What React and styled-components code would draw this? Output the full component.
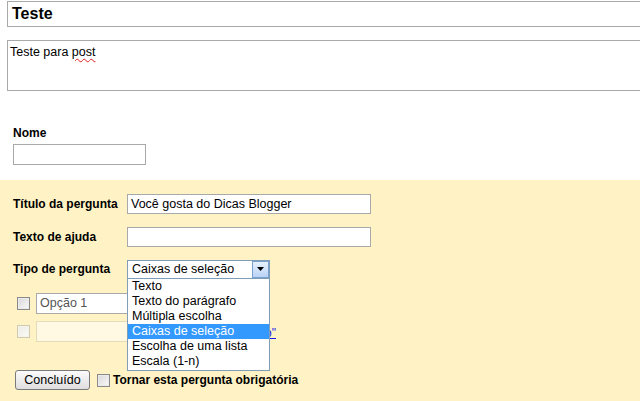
import React from 'react';
import styled, { createGlobalStyle } from 'styled-components';

const GlobalStyle = createGlobalStyle`
  html, body {
    margin: 0;
    padding: 0;
    width: 640px;
    height: 401px;
    overflow: hidden;
    background: #fff;
    font-family: "Liberation Sans", Arial, sans-serif;
    font-size: 12px;
    color: #000;
  }
`;

const Page = styled.div`
  width: 640px;
  height: 401px;
  display: flex;
  flex-direction: column;
`;

// top white part: title, description, "Nome"
const Header = styled.div`
  padding: 1px 0 0 7px;
  height: 180px;
  box-sizing: border-box;
`;

// both boxes run on past the right edge of the window, so no right border
const TitleBox = styled.div`
  height: 26px;
  box-sizing: border-box;
  border: 1px solid #a9a9a9;
  border-right: none;
  padding: 3px 0 0 4px;
  font-size: 16px;
  font-weight: bold;
`;

const DescBox = styled.div`
  height: 51px;
  margin-top: 13px;
  box-sizing: border-box;
  border: 1px solid #a9a9a9;
  border-right: none;
  padding: 4px 0 0 2px;
  font-size: 12.5px;
`;

const Misspelled = styled.span`
  text-decoration: underline wavy #e02020;
  text-decoration-thickness: 1px;
  text-underline-offset: 2px;
`;

const NameField = styled.div`
  margin: 35px 0 0 6px;
  display: flex;
  flex-direction: column;
  gap: 4px;
`;

const Label = styled.label`
  font-weight: bold;
  font-size: 12px;
  width: ${(p) => p.$width || 'auto'};
  flex-shrink: 0;
`;

const TextInput = styled.div`
  width: ${(p) => p.$width}px;
  height: ${(p) => p.$height || 20}px;
  box-sizing: border-box;
  border: 1px solid ${(p) => (p.$disabled ? '#e3dcba' : '#a9a9a9')};
  background: ${(p) => (p.$disabled ? '#fff9e3' : '#fff')};
  color: ${(p) => p.$color || '#000'};
  padding: 2px 0 0 3px;
  font-size: 12.5px;
  white-space: nowrap;
  overflow: hidden;
  flex-shrink: 0;
`;

// yellow editing area
const Editor = styled.div`
  flex: 1;
  background: #fff3c5;
  padding: 14px 0 0 13px;
`;

const Row = styled.div`
  display: flex;
  align-items: center;
  height: 20px;
  margin-bottom: ${(p) => p.$gap}px;
`;

const SelectWrap = styled.div`
  position: relative;
  width: 143px;
  height: 19px;
`;

const SelectBox = styled.div`
  width: 100%;
  height: 100%;
  box-sizing: border-box;
  border: 1px solid #7f9db9;
  background: #fff;
  display: flex;
  align-items: center;
  padding-left: 4px;
  font-size: 12.5px;
`;

const SelectText = styled.span`
  flex: 1;
`;

const ArrowButton = styled.span`
  width: 17px;
  height: 17px;
  box-sizing: border-box;
  border: 1px solid #7aa0ce;
  background: linear-gradient(#e8f1fd, #b9d3f6);
  display: flex;
  align-items: center;
  justify-content: center;
`;

const Menu = styled.ul`
  position: absolute;
  top: 18px;
  left: 0;
  width: 143px;
  box-sizing: border-box;
  margin: 0;
  padding: 0 0 1px;
  list-style: none;
  border: 1px solid #7f9db9;
  background: #fff;
  z-index: 2;
`;

const MenuItem = styled.li`
  height: 15px;
  line-height: 15px;
  padding-left: 4px;
  font-size: 12.5px;
  background: ${(p) => (p.$active ? '#3399ff' : 'transparent')};
  color: ${(p) => (p.$active ? '#fff' : '#000')};
`;

const OptionRow = styled.div`
  display: flex;
  align-items: center;
  gap: 6px;
  height: 21px;
  margin: ${(p) => p.$margin};
  padding-left: 4px;
`;

const Check = styled.span`
  width: 13px;
  height: 13px;
  box-sizing: border-box;
  flex-shrink: 0;
  border: 1px solid ${(p) => (p.$disabled ? '#cfcab2' : '#8a8a8a')};
  background: ${(p) =>
    p.$disabled
      ? 'linear-gradient(135deg, #ecebe4, #fbfbf8)'
      : 'linear-gradient(135deg, #d8d8d8, #fafafa)'};
  box-shadow: inset 0 0 0 1px ${(p) => (p.$disabled ? '#f5f3ea' : '#eaeaea')};
`;

const OtherLine = styled.div`
  width: 240px;
  display: flex;
  align-items: center;
  justify-content: space-between;
`;

const Link = styled.span`
  color: #1a1aee;
  text-decoration: underline;
  font-size: 12px;
  padding-top: 2px;
  cursor: pointer;
`;

const Footer = styled.div`
  display: flex;
  align-items: center;
  gap: 7px;
  margin: 28px 0 0 2px;
`;

const Button = styled.button`
  width: 75px;
  height: 20px;
  padding: 0;
  border: 1px solid #7a7a7a;
  border-radius: 3px;
  background: linear-gradient(#fbfbfb, #dedede);
  font-family: "Liberation Sans", Arial, sans-serif;
  font-size: 12.5px;
  color: #000;
`;

const RequiredLabel = styled.label`
  display: flex;
  align-items: center;
  gap: 3px;
  font-weight: bold;
  font-size: 12px;
`;

const types = [
  'Texto',
  'Texto do parágrafo',
  'Múltipla escolha',
  'Caixas de seleção',
  'Escolha de uma lista',
  'Escala (1-n)',
];

const App = () => (
  <>
    <GlobalStyle />
    <Page>
      <Header>
        <TitleBox>Teste</TitleBox>
        <DescBox>
          Teste para <Misspelled>post</Misspelled>
        </DescBox>
        <NameField>
          <Label>Nome</Label>
          <TextInput $width={133} $height={21} />
        </NameField>
      </Header>

      <Editor>
        <Row $gap={13}>
          <Label $width="114px">Título da pergunta</Label>
          <TextInput $width={244}>Você gosta do Dicas Blogger</TextInput>
        </Row>
        <Row $gap={12}>
          <Label $width="114px">Texto de ajuda</Label>
          <TextInput $width={244} />
        </Row>
        <Row $gap={0}>
          <Label $width="114px">Tipo de pergunta</Label>
          <SelectWrap>
            <SelectBox>
              <SelectText>Caixas de seleção</SelectText>
              <ArrowButton>
                <svg width="7" height="4" viewBox="0 0 7 4">
                  <path d="M0 0h7L3.5 4z" fill="#000" />
                </svg>
              </ArrowButton>
            </SelectBox>
            <Menu>
              {types.map((t) => (
                <MenuItem key={t} $active={t === 'Caixas de seleção'}>
                  {t}
                </MenuItem>
              ))}
            </Menu>
          </SelectWrap>
        </Row>

        <OptionRow $margin="14px 0 0 0">
          <Check />
          <TextInput $width={220} $height={21} $color="#555">
            Opção 1
          </TextInput>
        </OptionRow>
        <OptionRow $margin="7px 0 0 0">
          <Check $disabled />
          <OtherLine>
            <TextInput $width={200} $height={21} $disabled />
            <Link>"Outro"</Link>
          </OtherLine>
        </OptionRow>

        <Footer>
          <Button>Concluído</Button>
          <RequiredLabel>
            <Check />
            Tornar esta pergunta obrigatória
          </RequiredLabel>
        </Footer>
      </Editor>
    </Page>
  </>
);

export default App;
